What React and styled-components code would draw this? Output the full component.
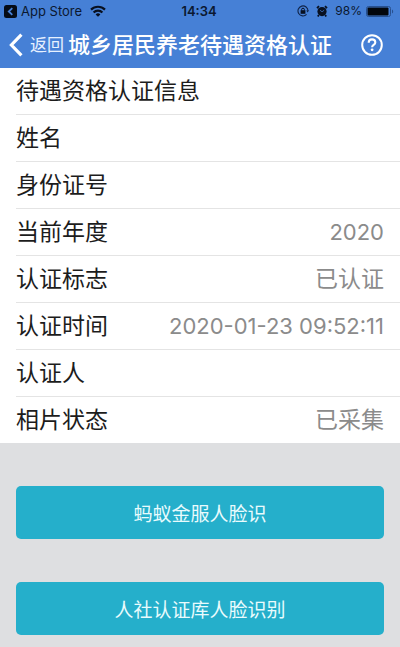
import React from 'react'
import styled, { createGlobalStyle } from 'styled-components'

const rows = [
  { id: 1, label: '待遇资格认证信息' },
  { id: 2, label: '姓名' },
  { id: 3, label: '身份证号' },
  { id: 4, label: '当前年度', value: '2020', numeric: true },
  { id: 5, label: '认证标志', value: '已认证' },
  { id: 6, label: '认证时间', value: '2020-01-23 09:52:11', numeric: true },
  { id: 7, label: '认证人' },
  { id: 8, label: '相片状态', value: '已采集' },
]

const actions = ['蚂蚁金服人脸识', '人社认证库人脸识别']

function StatusBar() {
  return (
    <StatusStyled>
      <div className="side">
        <svg width="13" height="13" viewBox="0 0 13 13">
          <rect width="13" height="13" rx="2.5" fill="#050b16" />
          <path d="M8.3 3.2L4.8 6.5l3.5 3.3" fill="none" stroke="#4680d6" strokeWidth="1.8" />
        </svg>
        <span className="app">App Store</span>
        <svg className="wifi" width="16" height="12" viewBox="0 0 16 12">
          <g fill="none" stroke="#081020" strokeWidth="2.2">
            <path d="M1 4.6a10 10 0 0 1 14 0" />
            <path d="M3.6 7.5a6.2 6.2 0 0 1 8.8 0" />
          </g>
          <path d="M8 11.8L5.6 9.4a3.4 3.4 0 0 1 4.8 0z" fill="#081020" />
        </svg>
      </div>
      <time>14:34</time>
      <div className="side right">
        <svg width="12" height="12" viewBox="0 0 12 12">
          <path d="M9.6 9.4A5 5 0 1 1 11 6" fill="none" stroke="#10244a" strokeWidth="1.1" />
          <path d="M9.2 5.6h2.8L10.6 7.6z" fill="#10244a" />
          <rect x="3.6" y="5.2" width="4.8" height="3.6" fill="#081020" />
          <path d="M4.6 5.4V4.6a1.4 1.4 0 0 1 2.8 0v.8" fill="none" stroke="#081020" />
        </svg>
        <svg className="alarm" width="12" height="12" viewBox="0 0 12 12">
          <circle cx="6" cy="6.6" r="4.6" fill="#081020" />
          <path d="M1 3.2L3 1.2M11 3.2L9 1.2M2.8 10l-1 1.4M9.2 10l1 1.4" stroke="#081020" strokeWidth="1.8" />
          <path d="M4 5.2l2 1.6 2.2-1.6" fill="none" stroke="#4680d6" strokeWidth=".7" />
        </svg>
        <span className="percent">98%</span>
        <svg className="battery" width="28" height="11" viewBox="0 0 28 11">
          <rect x=".5" y=".5" width="24" height="10" rx="2" fill="none" stroke="#28508f" />
          <rect x="1.5" y="1.5" width="21" height="8" rx="1" fill="#02060c" />
          <path d="M26 3.5c1.6.6 1.6 3.4 0 4z" fill="#28508f" />
        </svg>
      </div>
    </StatusStyled>
  )
}

function App() {
  return (
    <AppStyled>
      <GlobalStyle />
      <HeaderStyled>
        <StatusBar />
        <NavStyled>
          <BackButton type="button">
            <svg width="16" height="24" viewBox="0 0 16 24">
              <path d="M13.4 1.6L3.4 12l10 10.4" fill="none" stroke="#fff" strokeWidth="3.2" />
            </svg>
            返回
          </BackButton>
          <h1>城乡居民养老待遇资格认证</h1>
          <HelpButton type="button" aria-label="帮助">
            <svg width="22" height="22" viewBox="0 0 22 22" fill="none" stroke="#fff">
              <circle cx="11" cy="11" r="9.8" strokeWidth="2" />
              <path
                d="M7.7 8.7c0-2.1 1.4-3.3 3.3-3.3s3.3 1.2 3.3 3c0 2.5-3.2 2.5-3.2 4.8"
                strokeWidth="2.1"
              />
              <circle cx="11.1" cy="15.8" r="1.4" fill="#fff" stroke="none" />
            </svg>
          </HelpButton>
        </NavStyled>
      </HeaderStyled>
      <InfoList>
        {rows.map((row) => {
          return <InfoRow key={row.id}>
            <dt>{row.label}</dt>
            {row.value && <Value $numeric={row.numeric}>{row.value}</Value>}
          </InfoRow>
        })}
      </InfoList>
      <Actions>
        {actions.map((text) => <ActionButton key={text} type="button">{text}</ActionButton>)}
      </Actions>
    </AppStyled>
  )
}

const GlobalStyle = createGlobalStyle`
  * {
    box-sizing: border-box;
  }

  body {
    margin: 0;
    background: #dedfe1;
    font-family: Inter, 'Noto Sans CJK SC', sans-serif;
  }

  button {
    border: 0;
    padding: 0;
    background: none;
    color: inherit;
    font-family: inherit;
    cursor: pointer;
  }

  svg {
    display: block;
    flex: none;
  }
`;

const AppStyled = styled.div`
  min-height: 100vh;
`;

const HeaderStyled = styled.header`
  background: #4680d6;
  color: #fff;
`;

const StatusStyled = styled.div`
  display: flex;
  align-items: center;
  height: 22px;
  padding: 0 6px 0 4px;
  color: #0b1830;
  font-size: 13px;
  line-height: 22px;

  .side {
    display: flex;
    flex: 1;
    align-items: center;
  }

  .right {
    justify-content: flex-end;
  }

  .app {
    margin-left: 4px;
  }

  .wifi {
    margin-left: 8px;
  }

  time {
    font-weight: 600;
  }

  .alarm {
    margin: 0 7px;
  }

  .percent {
    font-size: 12px;
  }

  .battery {
    margin-left: 4px;
  }
`;

const NavStyled = styled.nav`
  display: flex;
  align-items: center;
  height: 46px;
  padding: 0 17px 0 8px;

  h1 {
    flex: 1;
    margin: 0 0 0 4px;
    font-size: 22px;
    font-weight: 500;
    line-height: 46px;
    white-space: nowrap;
  }
`;

const BackButton = styled.button`
  display: flex;
  align-items: center;
  gap: 6px;
  color: #e6f1ff;
  font-size: 17px;
  line-height: 46px;
`;

const HelpButton = styled.button`
  flex: none;
`;

const InfoList = styled.dl`
  margin: 0;
  padding-left: 16px;
  background: #fff;
`;

const InfoRow = styled.div`
  display: flex;
  justify-content: space-between;
  padding-right: 16px;
  border-bottom: 1px solid #e4e4e4;
  line-height: 46px;

  &:last-child {
    border-bottom: 0;
  }

  dt {
    color: #1c1c1c;
    font-size: 23px;
  }
`;

const Value = styled.dd`
  margin: 0;
  color: #8b8b8b;
  font-size: ${({ $numeric }) => ($numeric ? '22px' : '23px')};
`;

const Actions = styled.div`
  display: flex;
  flex-direction: column;
  gap: 43px;
  padding: 43px 16px 12px;
`;

const ActionButton = styled.button`
  height: 53px;
  border-radius: 5px;
  background: #25afcb;
  color: #e9fbfd;
  font-size: 19px;
`;

export default App
